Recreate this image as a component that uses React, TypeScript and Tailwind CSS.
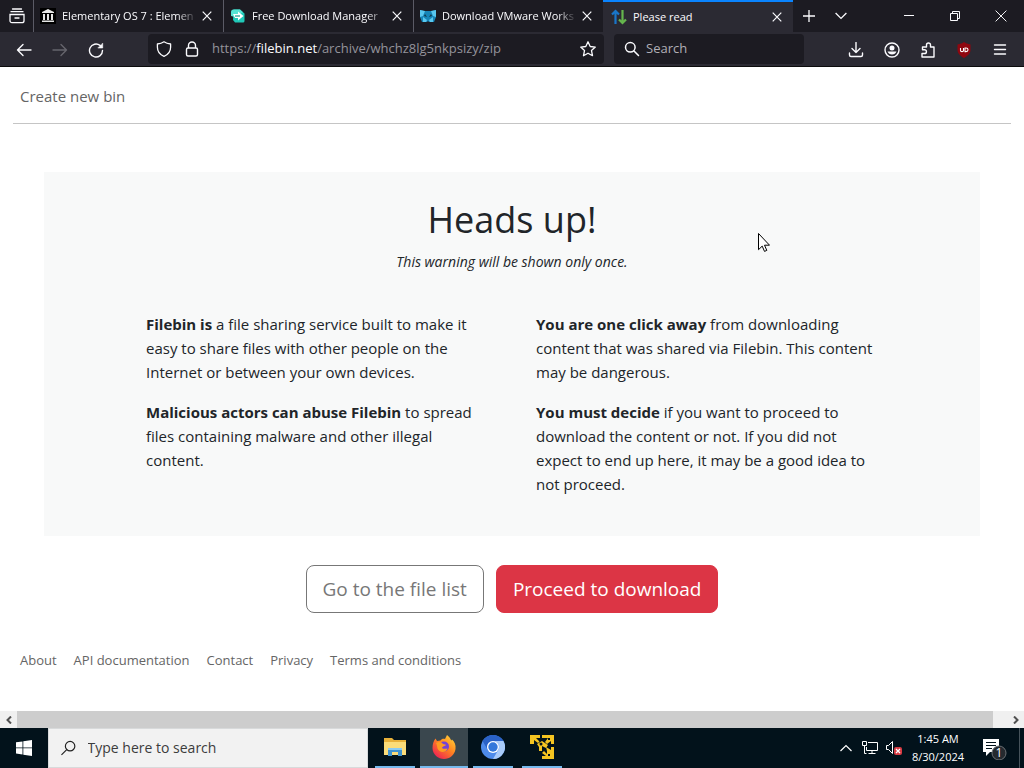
import type { ReactNode } from "react";

function Close() {
  return (
    <svg className="size-[10px]" viewBox="0 0 10 10" stroke="currentColor" strokeWidth="1.2" fill="none">
      <path d="M.7 .7l8.6 8.6M9.3 .7L.7 9.3" />
    </svg>
  );
}

function Tab({ icon, title, active = false }: { icon: ReactNode; title: string; active?: boolean }) {
  return (
    <div
      className={
        active
          ? "flex w-[190px] min-w-0 items-center border-t-2 border-[#0a84ff] bg-[#2b2a33] pl-2 pr-1.5"
          : "flex w-[190px] min-w-0 items-center border-l border-[#5b5b66] pl-1.5 pr-1.5"
      }
    >
      <button role="tab" aria-selected={active} className="flex min-w-0 flex-1 items-center gap-1.5">
        {icon}
        <span
          className={
            active
              ? "flex-1 text-left whitespace-nowrap"
              : "flex-1 text-left whitespace-nowrap [mask-image:linear-gradient(to_right,black_85%,transparent)]"
          }
        >
          {title}
        </span>
      </button>
      <button aria-label={"Close " + title} className="flex size-5 shrink-0 items-center justify-center">
        <Close />
      </button>
    </div>
  );
}

const columns = [
  [
    { lead: "Filebin is", text: " a file sharing service built to make it easy to share files with other people on the Internet or between your own devices." },
    { lead: "Malicious actors can abuse Filebin", text: " to spread files containing malware and other illegal content." },
  ],
  [
    { lead: "You are one click away", text: " from downloading content that was shared via Filebin. This content may be dangerous." },
    { lead: "You must decide", text: " if you want to proceed to download the content or not. If you did not expect to end up here, it may be a good idea to not proceed." },
  ],
];

const links = ["About", "API documentation", "Contact", "Privacy", "Terms and conditions"];

function TabBar() {
  return (
    <div className="flex h-8 bg-[#1c1b22] text-[11px]">
      <button aria-label="Recent browsing" className="flex w-[33px] items-center justify-center">
        <svg className="size-4" viewBox="0 0 16 16" fill="none" stroke="currentColor" strokeWidth="1.3" strokeLinecap="round">
          <path d="M3.500 1h9M2 3.700h12M1 6.500h14v6.200a2 2 0 0 1-2 2H3a2 2 0 0 1-2-2zM6 10h4" />
        </svg>
      </button>
      <div role="tablist" className="flex min-w-0">
        <Tab
          title="Elementary OS 7 : Elemen"
          icon={
            <svg className="size-4 shrink-0" viewBox="0 0 16 16">
              <path fill="#000" d="M0 0h16v16H0z" />
              <path fill="#e6e6e6" d="M8 1l6 3v1H2V4zM3 6h2v6H3zM7 6h2v6H7zM11 6h2v6h-2zM2 12.5h12V14H2z" />
            </svg>
          }
        />
        <Tab
          title="Free Download Manager"
          icon={
            <svg className="size-4 shrink-0" viewBox="0 0 16 16">
              <path fill="#20c9b8" d="M3.500 1.500H10l4.500 4V13a1.500 1.500 0 0 1-1.500 1.500H5L3 12z" />
              <path fill="#55e3d3" d="M3.500 1.500H10l3 2.700L5 9 1 8V4a2.500 2.500 0 0 1 2.500-2.500z" />
              <path fill="#fff" d="M3 6h5V3.500L13.500 8 8 12.500V10H5z" />
              <path fill="#18988c" d="M5 7.400h5v1.200H5z" />
            </svg>
          }
        />
        <Tab
          title="Download VMware Works"
          icon={
            <svg className="size-4 shrink-0" viewBox="0 0 16 16">
              <path fill="#1685b7" d="M0 2l4 1h8l4-1v7l-2 5H9l-1-1-1 1H2L0 9z" />
              <path fill="#59c7ef" d="M0 2l5 1-2 5-3 1zM16 2l-5 1 2 5 3 1zM3 9l4 3-1 2H3zM13 9l-4 3 1 2h3z" />
              <path fill="#123849" d="M5 6l2 3-3-1zM11 6L9 9l3-1z" />
            </svg>
          }
        />
        <Tab
          active
          title="Please read"
          icon={
            <svg className="size-4 shrink-0" viewBox="0 0 16 16" fill="none" strokeWidth="2.2">
              <path stroke="#1976c9" d="M4.500 15V2M1 5.500L4.500 2 8 5.500" />
              <path stroke="#65b64d" d="M11.500 1v13M8 10.500l3.500 3.500 3.500-3.500" />
            </svg>
          }
        />
      </div>
      <button aria-label="New tab" className="flex w-8 items-center justify-center">
        <svg className="size-3" viewBox="0 0 12 12" stroke="currentColor" strokeWidth="1.3"><path d="M6 0v12M0 6h12" /></svg>
      </button>
      <button aria-label="List all tabs" className="flex w-8 items-center justify-center">
        <svg className="h-2 w-3" viewBox="0 0 12 8" fill="none" stroke="currentColor" strokeWidth="1.3"><path d="M.6 1L6 6.400 11.400 1" /></svg>
      </button>
      <div className="ml-auto flex">
        <button aria-label="Minimize" className="flex w-[46px] items-center justify-center">
          <svg className="size-[10px]" viewBox="0 0 10 10" stroke="currentColor"><path d="M0 4.500h10" /></svg>
        </button>
        <button aria-label="Restore" className="flex w-[46px] items-center justify-center">
          <svg className="size-[10px]" viewBox="0 0 10 10" fill="none" stroke="currentColor"><path d="M.5 2.500h7v7h-7zM2.500 2.500v-2h7v7h-2" /></svg>
        </button>
        <button aria-label="Close window" className="flex w-[46px] items-center justify-center">
          <svg className="size-3" viewBox="0 0 10 10" fill="none" stroke="currentColor" strokeWidth=".8"><path d="M.5 .5l9 9M9.500 .5l-9 9" /></svg>
        </button>
      </div>
    </div>
  );
}

function NavButton({ label, children }: { label: string; children: ReactNode }) {
  return (
    <button aria-label={label} className="flex w-9 shrink-0 items-center justify-center">
      <svg className="size-4" viewBox="0 0 16 16" fill="none" stroke="currentColor" strokeWidth="1.4" strokeLinecap="round" strokeLinejoin="round">
        {children}
      </svg>
    </button>
  );
}

function NavBar() {
  return (
    <div className="flex h-[35px] border-b border-[#0c0c0d] bg-[#2b2a33] px-1.5 pt-0.5">
      <div className="flex">
        <NavButton label="Back"><path d="M15 8H1.500M7 2.500L1.500 8 7 13.500" /></NavButton>
        <div className="flex text-[#66656d]">
          <NavButton label="Forward"><path d="M1 8h13.500M9 2.500L14.500 8 9 13.500" /></NavButton>
        </div>
        <NavButton label="Reload">
          <path d="M14.500 8.500A6.500 6.500 0 1 1 12 3.400L13.500 5" />
          <path d="M14.700 1.500V6h-4.500z" fill="currentColor" strokeWidth=".6" />
        </NavButton>
      </div>
      <div className="mb-0.5 ml-[34px] flex min-w-0 flex-1 items-center gap-3 rounded bg-[#1c1b22] px-2">
        <svg className="size-4 shrink-0" viewBox="0 0 16 16" fill="none" stroke="currentColor" strokeWidth="1.3">
          <path d="M8 .8C6 2.200 3.600 2.800 1.400 3v3.300c0 4.400 3 7.600 6.600 9 3.600-1.400 6.600-4.600 6.600-9V3C12.400 2.800 10 2.200 8 .8z" strokeLinejoin="round" />
        </svg>
        <svg className="size-4 shrink-0" viewBox="0 0 16 16" fill="none" stroke="currentColor" strokeWidth="1.4">
          <rect x="2.500" y="7" width="11" height="8" rx="1.500" />
          <path d="M4.500 7V4.500a3.500 3.500 0 0 1 7 0V7" />
        </svg>
        <p aria-label="Address" className="min-w-0 flex-1 truncate text-[13px] text-[#94939b]">
          https://<span className="text-[#fbfbfe]">filebin.net</span>/archive/whchz8lg5nkpsizy/zip
        </p>
        <button aria-label="Bookmark this page">
          <svg className="size-4" viewBox="0 0 16 16" fill="none" stroke="currentColor" strokeWidth="1.3" strokeLinejoin="round">
            <path d="M8 .8l2.200 4.700 5.100.6-3.800 3.500 1 5.100L8 12.200l-4.500 2.500 1-5.100L.7 6.100l5.100-.6z" />
          </svg>
        </button>
      </div>
      <label className="mb-0.5 ml-2.5 flex w-[190px] items-center gap-1.5 rounded bg-[#1c1b22] px-2.5">
        <svg className="size-4 shrink-0" viewBox="0 0 16 16" fill="none" stroke="currentColor" strokeWidth="1.5" strokeLinecap="round">
          <circle cx="6.300" cy="6.300" r="4.800" />
          <path d="M10 10l4.500 4.500" />
        </svg>
        <input aria-label="Search" placeholder="Search" className="w-full min-w-0 bg-transparent text-[13px] outline-none placeholder:text-[#b0afb6]" />
      </label>
      <div className="ml-[34px] flex">
        <NavButton label="Downloads"><path d="M8 .5V10.500M4 6.500l4 4 4-4M1.500 11v2a1.500 1.500 0 0 0 1.500 1.500h10a1.500 1.500 0 0 0 1.500-1.500v-2" /></NavButton>
        <NavButton label="Account">
          <circle cx="8" cy="8" r="7" />
          <circle cx="8" cy="6" r="2.500" fill="currentColor" stroke="none" />
          <path d="M3.500 9.500h9a4.900 4.900 0 0 1-9 0z" fill="currentColor" stroke="none" />
        </NavButton>
        <NavButton label="Extensions"><path d="M2 11.500V15h12V5h-3.500V3a2 2 0 0 0-4 0v2H2.500v2.800H4.600a1.800 1.800 0 0 1 0 3.700z" /></NavButton>
        <button aria-label="uBlock Origin" className="flex w-9 items-center justify-center">
          <svg className="size-4" viewBox="0 0 16 16" fill="none">
            <path fill="#8f0710" d="M8 0l2 1.200 4.500 1.300V8c0 4-4 6.500-6.500 8-2.500-1.500-6.500-4-6.500-8V2.500L6 1.200z" />
            <path stroke="#fff" strokeWidth="1.100" d="M4.500 6v2.500c0 1.500 3 1.500 3 0V6M9 6v3.600h1c2.700 0 2.700-3.600 0-3.600z" />
          </svg>
        </button>
        <NavButton label="Application menu"><path d="M2.500 3h11M2.500 7.500h11M2.500 12h11" /></NavButton>
      </div>
    </div>
  );
}

function Page() {
  return (
    <main className="relative flex-1 bg-white px-[13px] text-[#212529]">
      <nav className="border-b border-[#c5c5c5] px-[7px] pt-[17px] pb-[14px] text-[15px] leading-[25px] text-[#656565]">
        <a href="#new">Create new bin</a>
      </nav>
      <section className="mx-[31px] mt-12 bg-[#f8f9f9] px-[102px] pt-6 pb-6">
        <h1 className="text-center text-[36px] leading-[48px]">Heads up!</h1>
        <p className="mt-2 text-center text-sm leading-5 italic">This warning will be shown only once.</p>
        <div className="mt-10 grid grid-cols-2 gap-12 text-[15px] leading-6">
          {columns.map((column) => (
            <div key={column[0].lead}>
              {column.map((item) => (
                <p key={item.lead} className="mb-4">
                  <strong className="font-bold">{item.lead}</strong>
                  {item.text}
                </p>
              ))}
            </div>
          ))}
        </div>
      </section>
      <div className="mt-[29px] flex justify-center gap-3 text-[19px] leading-[30px]">
        <button className="rounded-lg border border-[#777] px-4 py-2 text-[#777]">Go to the file list</button>
        <button className="rounded-lg border border-[#dc3545] bg-[#dc3545] px-4 py-2 text-white">Proceed to download</button>
      </div>
      <footer className="mt-9 flex gap-[17px] px-[7px] text-[13px] leading-[22px] text-[#656565]">
        {links.map((link) => (
          <a key={link} href="#info">{link}</a>
        ))}
      </footer>
      <svg className="absolute top-[166px] left-[758px] h-5 w-3" viewBox="0 0 12 20" fill="#fff" stroke="#000">
        <path d="M.5 .5v16.200l3.700-3.600 2.300 5.300 2.300-1-2.300-5.200h5z" />
      </svg>
    </main>
  );
}

function TaskButton({ label, active = false, children }: { label: string; active?: boolean; children: ReactNode }) {
  return (
    <button
      aria-label={label}
      className={active ? "flex w-12 flex-col items-center bg-[#3a474e]" : "flex w-12 flex-col items-center px-1"}
    >
      <span className="flex flex-1 items-center"><svg className="size-6" viewBox="0 0 24 24">{children}</svg></span>
      <span className="h-0.5 w-full bg-[#76b9ed]" />
    </button>
  );
}

function Taskbar() {
  return (
    <div className="flex h-10 bg-[#02121b] text-white">
      <button aria-label="Start" className="flex w-12 items-center justify-center">
        <svg className="size-4" viewBox="0 0 16 16" fill="#fff"><path d="M0 2.300l6.500-.9v6.100H0zM7.300 1.300L16 0v7.500H7.300zM0 8.300h6.500v6.200L0 13.600zM7.300 8.300H16V16l-8.700-1.300z" /></svg>
      </button>
      <label className="flex w-80 items-center gap-3 border border-[#d8dadb] bg-[#f2f2f2] px-3 text-[#333]">
        <svg className="size-4" viewBox="0 0 16 16" fill="none" stroke="#222" strokeWidth="1.300"><circle cx="10" cy="6" r="5.200" /><path d="M6.300 9.700L.5 15.500" /></svg>
        <input aria-label="Type here to search" placeholder="Type here to search" className="w-full min-w-0 bg-transparent text-sm outline-none placeholder:text-[#3c3c3c]" />
      </label>
      <div className="ml-[3px] flex gap-px">
        <TaskButton label="File Explorer">
          <path fill="#e8b13a" d="M1 3h8l2 2h12v15H1z" />
          <path fill="#fbdc79" d="M1 7h22v13H1z" />
          <path fill="#3f92cf" d="M5 13h14v8h-4v-4H9v4H5z" />
          <path fill="#8acbf2" d="M5 13h14v2H5z" />
        </TaskButton>
        <TaskButton label="Firefox" active>
          <defs>
            <linearGradient id="flame" x1="1" y1="0" x2="0.200" y2="1"><stop stopColor="#ffe03d" /><stop offset=".5" stopColor="#ff8420" /><stop offset="1" stopColor="#ef1d56" /></linearGradient>
          </defs>
          <path fill="url(#flame)" d="M15 0c2 1.500 3.500 3.500 4.200 5.500L20 4.500C22.500 6.500 24 10 23.500 14c-.8 6-5.800 10-11.500 10S.5 19.500.5 13C.5 9 1.500 6 3.500 3.500L5 6l3.500-.5C9.500 4 11 3.500 13 4z" />
          <circle cx="12" cy="11.500" r="5" fill="#7543d5" />
          <path fill="#ff9b21" d="M4 8c3-2 6-1 7 1l3 .8c-1 2-3.500 1.200-4 3.200 2 1.500 4 .5 5.500.5-1 4-8 5-10 0C5 11 5 9.500 4 8z" />
        </TaskButton>
        <TaskButton label="Chromium">
          <circle cx="12" cy="12" r="12" fill="#4e8bea" />
          <path fill="#a9cbfa" d="M12 6h10.400A12 12 0 0 1 12 24l5.200-9A6 6 0 0 0 12 6z" />
          <path fill="#2a62c7" d="M1.600 6A12 12 0 0 1 22.400 6H12a6 6 0 0 0-5.200 9z" />
          <circle cx="12" cy="12" r="6" fill="#fff" />
          <circle cx="12" cy="12" r="4.700" fill="#3478db" />
        </TaskButton>
        <TaskButton label="Network tool">
          <path fill="#f5c421" d="M0 0h10v3H6l3.500 3.500L8 8 4 5v4H0zM12 0h12v9h-3V6l-4 3-2-2 3-4h-6zM16 12l5 3v-3h3v12H12v-3h4l-4-3 2-2 3 3v-3zM7 9l5-3 6 4-2 3-4-2v5H9v-4z" />
          <circle cx="11" cy="9" r="1.500" fill="#02121b" />
          <path fill="#02121b" d="M18 3h2v2h-2zM18 19h2v2h-2z" />
        </TaskButton>
      </div>
      <div className="ml-auto flex items-center">
        <button aria-label="Show hidden icons" className="flex w-6 justify-center"><svg className="h-2 w-3" viewBox="0 0 12 8" fill="none" stroke="currentColor" strokeWidth="1.200"><path d="M.5 7L6 1.500 11.500 7" /></svg></button>
        <button aria-label="Network" className="flex w-6 justify-center"><svg className="size-4" viewBox="0 0 16 16" fill="none" stroke="currentColor"><path d="M6 2.500h9.500v8H4.500V7M10 10.500v3M6.500 13.500h7M.5 1.500h4v4h-4zM2.500 5.500v8h2" /></svg></button>
        <button aria-label="Volume muted" className="flex w-6 justify-center"><svg className="size-4" viewBox="0 0 16 16" fill="none" stroke="currentColor"><path d="M.5 5.500h2l4-4v12l-4-4h-2z" /><rect x="8" y="7" width="8" height="8" rx="2" fill="#d83b43" stroke="none" /><path d="M10 9l4 4M14 9l-4 4" strokeWidth="1.300" /></svg></button>
        <div className="w-16 text-center text-[11px] leading-[18px] whitespace-nowrap"><p>1:45 AM</p><p>8/30/2024</p></div>
        <button aria-label="1 notification" className="flex w-[49px] justify-center">
          <svg className="size-6" viewBox="0 0 24 24">
            <path fill="#fff" d="M0 3h16v13H7l-4 4v-4H0z" />
            <path stroke="#02121b" d="M3 6.500h10M3 9.500h10M3 12.500h6" />
            <circle cx="16" cy="17" r="7" fill="#252a2f" stroke="#6b7074" />
            <text x="16" y="21" textAnchor="middle" fontSize="12" fill="#fff">1</text>
          </svg>
        </button>
        <span className="mr-1 h-10 w-px bg-[#46535b]" />
      </div>
    </div>
  );
}

export default function App() {
  return (
    <div className="flex min-h-screen flex-col font-['Open_Sans','Noto_Sans',sans-serif]">
      <header className="text-[#fbfbfe]"><TabBar /><NavBar /></header>
      <Page />
      <div className="flex h-[17px] bg-[#f0f0f0] text-[#505050]">
        <button aria-label="Scroll left" className="flex w-[17px] items-center justify-center"><svg className="h-2 w-1.5" viewBox="0 0 6 8" fill="none" stroke="currentColor" strokeWidth="2"><path d="M5 .5L1.500 4 5 7.500" /></svg></button>
        <div className="flex-1 bg-[#cdcdcd]" />
        <span className="w-[14px]" />
        <button aria-label="Scroll right" className="flex w-[17px] items-center justify-center"><svg className="h-2 w-1.5" viewBox="0 0 6 8" fill="none" stroke="currentColor" strokeWidth="2"><path d="M1 .5L4.500 4 1 7.500" /></svg></button>
      </div>
      <Taskbar />
    </div>
  );
}
